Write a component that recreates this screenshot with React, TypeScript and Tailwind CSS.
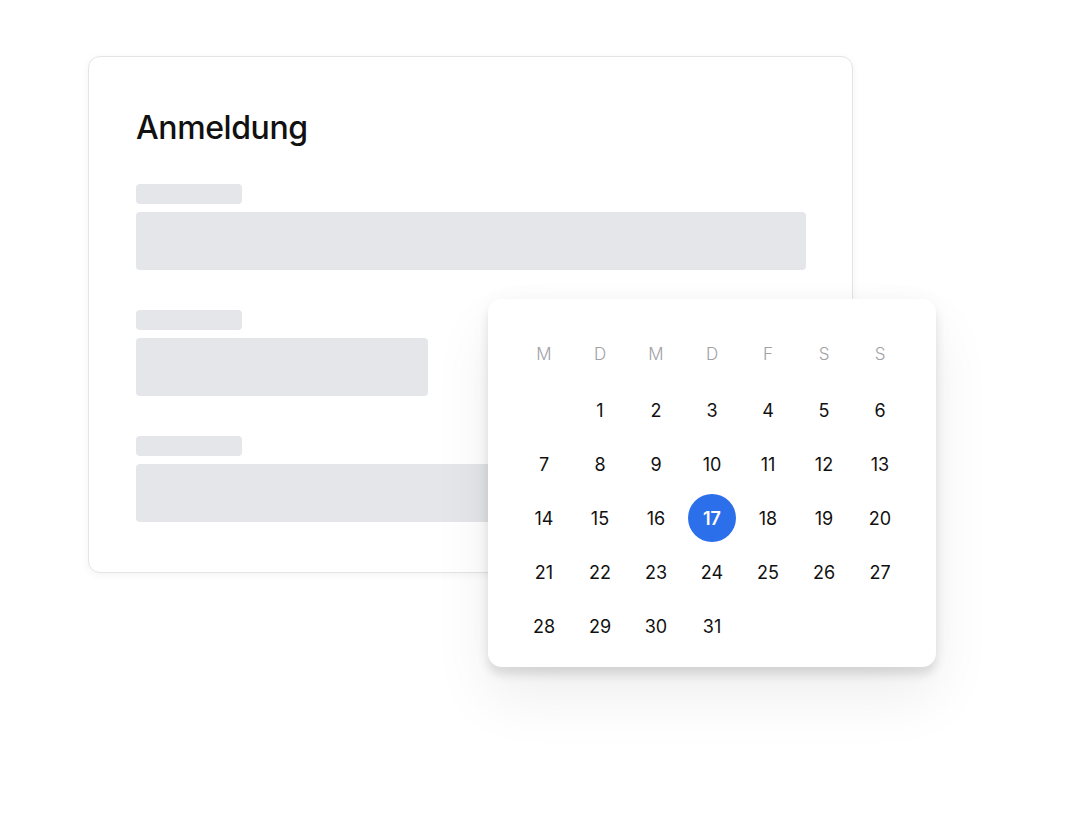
import React from "react";

const days = ["M", "D", "M", "D", "F", "S", "S"];
const cells: (number | null)[] = [null, ...Array.from({ length: 31 }, (_, i) => i + 1)];

export default function App() {
  return (
    <div
      className="w-full h-[818px] bg-white overflow-hidden pl-[88px] pt-[56px]"
      style={{ fontFamily: "Inter, 'Noto Sans', sans-serif" }}
    >
      <div className="relative w-[765px]">
        <div className="w-[765px] h-[517px] bg-white border border-[#e4e4e7] rounded-[12px] shadow-[0_2px_8px_rgba(0,0,0,0.05)] px-[47px] pt-[51px]">
          <h1 className="text-[32px] leading-[40px] font-medium text-[#111111] tracking-[-0.4px] mb-[36px]">
            Anmeldung
          </h1>
          <div className="flex flex-col gap-[40px]">
            <div className="flex flex-col gap-[8px]">
              <div className="w-[106px] h-[20px] rounded-[4px] bg-[#e5e6e9]" />
              <div className="w-[670px] h-[58px] rounded-[4px] bg-[#e5e6e9]" />
            </div>
            <div className="flex flex-col gap-[8px]">
              <div className="w-[106px] h-[20px] rounded-[4px] bg-[#e5e6e9]" />
              <div className="w-[292px] h-[58px] rounded-[4px] bg-[#e5e6e9]" />
            </div>
            <div className="flex flex-col gap-[8px]">
              <div className="w-[106px] h-[20px] rounded-[4px] bg-[#e5e6e9]" />
              <div className="w-[670px] h-[58px] rounded-[4px] bg-[#e5e6e9]" />
            </div>
          </div>
        </div>

        <div className="absolute left-[400px] top-[243px] w-[448px] h-[368px] bg-white rounded-[14px] px-[28px] pt-[29px] shadow-[0_8px_10px_rgba(0,0,0,0.10),0_30px_60px_rgba(0,0,0,0.07),0_0_20px_rgba(0,0,0,0.04)]">
          <div className="grid grid-cols-7">
            {days.map((d, i) => (
              <div
                key={i}
                className="h-[55px] pb-[1px] flex items-center justify-center text-[17px] font-light text-[#a1a1a6]"
              >
                {d}
              </div>
            ))}
            {cells.map((n, i) => (
              <div key={i} className="h-[54px] flex items-center justify-center">
                {n === 17 ? (
                  <div className="w-[48px] h-[48px] rounded-full bg-[#2c6fea] flex items-center justify-center text-white text-[18px] font-semibold">
                    17
                  </div>
                ) : n !== null ? (
                  <span className="text-[18px] text-[#111111]">{n}</span>
                ) : null}
              </div>
            ))}
          </div>
        </div>
      </div>
    </div>
  );
}
